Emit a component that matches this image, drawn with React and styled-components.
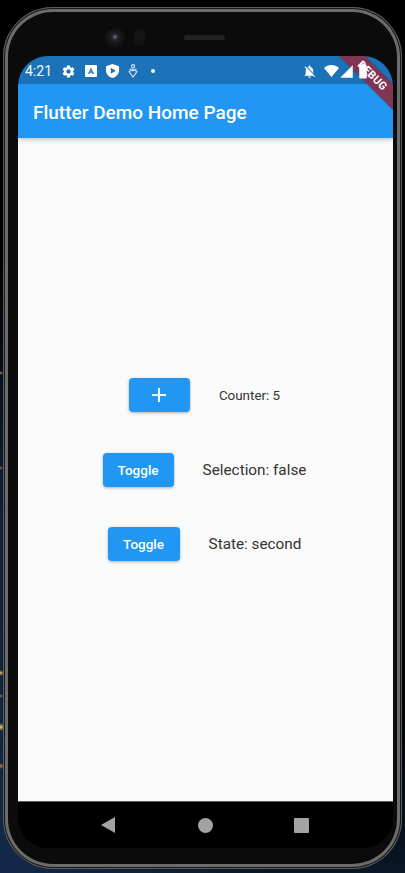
import React from "react";
import styled, { createGlobalStyle } from "styled-components";
import {
  MdSettings,
  MdNotificationsOff,
  MdSignalCellular4Bar,
  MdBatteryFull,
} from "react-icons/md";

const GlobalStyle = createGlobalStyle`
  html, body {
    margin: 0;
    padding: 0;
    background: #000;
  }
  * {
    box-sizing: border-box;
  }
`;

function App() {
  return (
    <>
      <GlobalStyle />
      <Page>
        <Phone>
          <SensorBar>
            <Camera />
            <Proximity />
            <Speaker />
          </SensorBar>
          <Screen>
            <StatusBar>
              <Time>4:21</Time>
              <StatusLeft>
                <MdSettings size={15} />
                <AppTile />
                <ShieldIcon />
                <RibbonIcon />
                <Dot />
              </StatusLeft>
              <StatusRight>
                <MdNotificationsOff size={15} />
                <WifiIcon />
                <SignalSlot>
                  <MdSignalCellular4Bar size={15} />
                </SignalSlot>
                <BatterySlot>
                  <MdBatteryFull size={18} />
                </BatterySlot>
              </StatusRight>
            </StatusBar>
            <DebugBanner>DEBUG</DebugBanner>
            <AppBar>
              <Title>Flutter Demo Home Page</Title>
            </AppBar>
            <Body>
              <Row>
                <ActionButton $width={61} aria-label="Increment">
                  <PlusIcon />
                </ActionButton>
                <SmallLabel>Counter: 5</SmallLabel>
              </Row>
              <Row>
                <ActionButton $width={71}>Toggle</ActionButton>
                <Label>Selection: false</Label>
              </Row>
              <Row>
                <ActionButton $width={72}>Toggle</ActionButton>
                <Label>State: second</Label>
              </Row>
            </Body>
            <NavBar>
              <BackGlyph width="15" height="16" viewBox="0 0 15 16">
                <path fill="#a3a3a3" d="M14 0v16L0 8z" />
              </BackGlyph>
              <HomeIcon />
              <RecentsIcon />
            </NavBar>
          </Screen>
        </Phone>
      </Page>
    </>
  );
}

const AppTile = () => (
  <svg width="12" height="12" viewBox="0 0 12 12">
    <path
      fill="#fff"
      fillRule="evenodd"
      d="M1 0h10a1 1 0 0 1 1 1v10a1 1 0 0 1-1 1H1a1 1 0 0 1-1-1V1a1 1 0 0 1 1-1zM6 2.4 3 9h1.5l.5-1.2h2L7.5 9H9L6 2.4zM6 5l.6 1.6H5.4L6 5z"
    />
  </svg>
);

const ShieldIcon = () => (
  <svg width="13" height="14" viewBox="0 0 13 14">
    <path
      fill="#fff"
      fillRule="evenodd"
      d="M6.5 0 13 2.2v4.2c0 3.4-2.6 6.4-6.5 7.6C2.6 12.8 0 9.8 0 6.4V2.2L6.5 0zM4.8 3.8v6l5-3-5-3z"
    />
  </svg>
);

const RibbonIcon = () => (
  <svg width="10" height="14" viewBox="0 0 10 14" fill="none" stroke="#dfe9f3" strokeWidth="1.1">
    <circle cx="5" cy="2.2" r="1.6" />
    <path d="M1.3 5.2h7.4M1 7.5 5 13l4-5.5C8 6.2 2 6.2 1 7.5z" />
  </svg>
);

const WifiIcon = () => (
  <svg width="15" height="12" viewBox="0 0 15 12">
    <path fill="#fff" d="M7.5 12 0 3C2 1.2 4.6 0 7.5 0S13 1.2 15 3L7.5 12z" />
  </svg>
);

const PlusIcon = () => (
  <svg width="14" height="14" viewBox="0 0 14 14">
    <path fill="#fff" d="M6 0h2v6h6v2H8v6H6V8H0V6h6z" />
  </svg>
);

const BackGlyph = styled("svg")`
  margin-left: -1px;
`;

const HomeIcon = styled("span")`
  width: 15px;
  height: 15px;
  border-radius: 50%;
  background: #a3a3a3;
`;

const RecentsIcon = styled("span")`
  width: 15px;
  height: 15px;
  border-radius: 1px;
  background: #a3a3a3;
`;

const Page = styled("div")`
  width: 405px;
  height: 873px;
  overflow: hidden;
  padding: 7px 3px 4px;
  background:
    radial-gradient(circle at 1px 373px, #c98a3a 0, transparent 2px),
    radial-gradient(circle at 1px 468px, #a8683a 0, transparent 2px),
    radial-gradient(circle at 1px 673px, #f0b84a 0, transparent 3px),
    radial-gradient(circle at 1px 696px, #9a7a4a 0, transparent 2px),
    radial-gradient(circle at 1px 727px, #ffcf5e 0, transparent 4px),
    radial-gradient(circle at 1px 766px, #c9772f 0, transparent 3px),
    radial-gradient(ellipse 260px 620px at 0 873px, #12294a 0, #0e2038 60%, transparent 100%),
    linear-gradient(180deg, #000 80%, #0a1626 100%);
`;

const Phone = styled("div")`
  height: 862px;
  padding: 1px 9px 13px 15px;
  border-radius: 50px;
  background: #0b0b0b;
  box-shadow:
    inset 0 0 0 1px #5e5e5e,
    inset 0 0 0 2px #161616,
    inset 0 0 0 5px #6c6c6c;
`;

const SensorBar = styled("div")`
  height: 48px;
  display: flex;
  align-items: center;
  padding: 11px 0 0 87px;
`;

const Camera = styled("div")`
  width: 20px;
  height: 20px;
  border-radius: 50%;
  background: radial-gradient(circle at 50% 45%, #7a8088 0, #23252a 18%, #141517 45%, #0d0d0e 100%);
`;

const Proximity = styled("div")`
  width: 11px;
  height: 17px;
  margin-left: 9px;
  border-radius: 6px;
  background: #131314;
`;

const Speaker = styled("div")`
  width: 41px;
  height: 5px;
  margin-left: 39px;
  border-radius: 2px;
  background: #222;
`;

const Screen = styled("div")`
  position: relative;
  width: 375px;
  height: 792px;
  display: flex;
  flex-direction: column;
  overflow: hidden;
  border-radius: 30px;
  background: #000;
  font-family: Roboto, "Liberation Sans", sans-serif;
`;

const StatusBar = styled("div")`
  height: 28px;
  flex: none;
  display: flex;
  align-items: center;
  padding: 2px 21px 0 7px;
  background: #1c72b8;
  color: #fff;
`;

const Time = styled("span")`
  font-size: 14px;
  color: #f2f6fa;
`;

const StatusLeft = styled("div")`
  display: flex;
  align-items: center;
  gap: 9px;
  margin-left: 9px;

  svg {
    display: block;
  }
`;

const Dot = styled("span")`
  width: 4px;
  height: 4px;
  margin-left: 4px;
  border-radius: 50%;
  background: #fff;
`;

// the system icons sit on top of the debug ribbon
const StatusRight = styled("div")`
  position: relative;
  z-index: 2;
  display: flex;
  align-items: center;
  margin-left: auto;
  gap: 2px;

  svg {
    display: block;
  }

  > svg:first-child {
    margin-right: 5px;
  }
`;

const SignalSlot = styled("span")`
  margin-left: -2px;
`;

const BatterySlot = styled("span")`
  margin-left: -2px;
`;

const DebugBanner = styled("div")`
  position: absolute;
  top: 11px;
  left: 294px;
  z-index: 1;
  width: 120px;
  height: 18px;
  transform: rotate(45deg);
  background: #7f3553;
  box-shadow: 0 0 2px rgba(0, 0, 0, 0.3);
  color: #fff;
  font-size: 11px;
  font-weight: 700;
  line-height: 18px;
  text-align: center;
  letter-spacing: 0.3px;
`;

const AppBar = styled("div")`
  position: relative;
  height: 54px;
  flex: none;
  display: flex;
  align-items: center;
  padding: 2px 15px 0;
  background: #2196f3;
  box-shadow: 0 2px 4px rgba(0, 0, 0, 0.2);
`;

const Title = styled("h1")`
  margin: 0;
  font-size: 19px;
  font-weight: 500;
  color: #fff;
`;

const Body = styled("div")`
  flex: 1;
  display: flex;
  flex-direction: column;
  align-items: center;
  justify-content: center;
  gap: 40.5px;
  padding-right: 2px;
  background: #fafafa;
`;

const Row = styled("div")`
  display: flex;
  align-items: center;
  gap: 29px;
`;

const ActionButton = styled("button")`
  width: ${props => props.$width}px;
  height: 34px;
  display: flex;
  align-items: center;
  justify-content: center;
  padding: 0;
  border: 0;
  border-radius: 4px;
  background: #2196f3;
  box-shadow: 0 1px 3px rgba(0, 0, 0, 0.3);
  color: #fff;
  font-family: inherit;
  font-size: 13.5px;
  font-weight: 500;
`;

const SmallLabel = styled("span")`
  font-size: 13.4px;
  color: #333;
`;

const Label = styled("span")`
  font-size: 15.3px;
  color: #333;
`;

const NavBar = styled("div")`
  height: 47px;
  flex: none;
  display: grid;
  grid-template-columns: 15px 15px 15px;
  justify-content: center;
  align-items: center;
  column-gap: 81px;
  border-top: 1px solid #5a5a5a;
  background: #000;
`;

export default App;
